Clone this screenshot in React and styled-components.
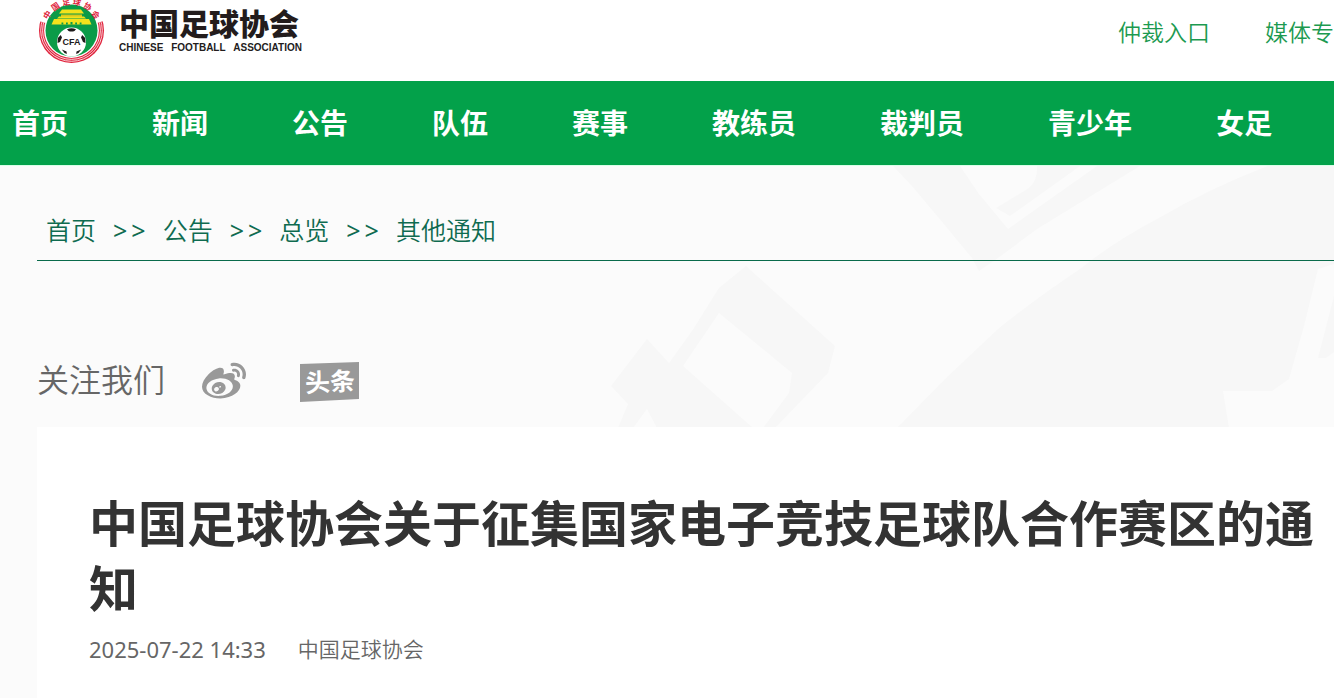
import styled, { createGlobalStyle } from "styled-components";
import { FaWeibo } from "react-icons/fa";

const menu = ["首页", "新闻", "公告", "队伍", "赛事", "教练员", "裁判员", "青少年", "女足"];
const caminho = ["首页", "公告", "总览", "其他通知"];
const emblemChars = [
    ["中", -57],
    ["国", -34],
    ["足", -11],
    ["球", 11],
    ["协", 34],
    ["会", 57],
];

function Emblem() {
    return (
        <svg width="66" height="64" viewBox="39 0 66 64" aria-hidden="true">
            <circle cx="71.5" cy="30.5" r="32.5" fill="#e0233c" />
            <circle cx="71.5" cy="30.5" r="30.8" fill="none" stroke="#fff" strokeWidth="0.8" />
            <circle cx="71.5" cy="30.5" r="28.9" fill="none" stroke="#fff" strokeWidth="0.8" />
            <circle cx="71.5" cy="30.5" r="27.4" fill="#fff" />
            <path d="M71.5 30.5L36 20V-6H107V20Z" fill="#fff" />
            <circle cx="71.5" cy="30.5" r="26" fill="#0b9b48" />
            {emblemChars.map(([char, angle]) => (
                <text
                    key={char}
                    x="71.5"
                    y="4.6"
                    textAnchor="middle"
                    transform={`rotate(${angle} 71.5 30.5)`}
                    fill="#e0233c"
                    fontFamily="'Noto Sans CJK SC', sans-serif"
                    fontWeight="700"
                    fontSize="8"
                >
                    {char}
                </text>
            ))}
            <path d="M62 9.5H81L84 13.5H59Z" fill="#f3e21c" />
            <path d="M61 14.5H82V17H61Z" fill="#d9c81d" />
            <path d="M57 18.5L59 16.5H84L86 18.5Z" fill="#f3e21c" />
            <path d="M54 19H89L91.5 24.5H51.5Z" fill="#f3e21c" />
            <path d="M61.5 24.5v-2h1.8v2M66 24.5v-2h1.8v2M70.5 24.5v-2.6h2v2.6M75.2 24.5v-2H77v2M79.7 24.5v-2h1.8v2" fill="#0b9b48" />
            <circle cx="71.5" cy="42" r="14.5" fill="#fff" />
            <path d="M67 29.3Q71.5 27 76 29.3L74.5 31Q71.5 32 68.5 31Z" fill="#1d1a1a" />
            <path d="M57.8 38L60.8 35L62 37.5L60 42L57.5 43Z" fill="#1d1a1a" />
            <path d="M85.2 38L82.2 35L81 37.5L83 42L85.5 43Z" fill="#1d1a1a" />
            <path d="M61.8 49.5L66.5 51.5L66.8 54L64.5 53Z" fill="#1d1a1a" />
            <path d="M81.2 49.5L76.5 51.5L76.2 54L78.5 53Z" fill="#1d1a1a" />
            <text
                x="71.5"
                y="45"
                textAnchor="middle"
                fill="#1d1a1a"
                fontFamily="'Liberation Sans', sans-serif"
                fontWeight="700"
                fontSize="9"
            >
                CFA
            </text>
        </svg>
    );
}

function Toutiao() {
    return (
        <svg width="60" height="40" viewBox="0 0 60 40" aria-hidden="true">
            <path d="M0 2L59 0V37L0 40Z" fill="#999" />
            <text
                x="30"
                y="29"
                textAnchor="middle"
                transform="rotate(-3 30 20)"
                fill="#fff"
                fontFamily="'Noto Sans CJK SC', sans-serif"
                fontWeight="700"
                fontSize="25"
            >
                头条
            </text>
        </svg>
    );
}

function Watermark() {
    return (
        <Pattern viewBox="0 0 754 262" aria-hidden="true">
            <path d="M313 0H380L399 28L428 63L517 0H560L457 63L418 92L399 105L392 92L363 57L332 20Z" />
            <path d="M457 0H500L430 50L416 42L449 22Q458 14 457 0Z" />
            <path d="M688 0Q630 22 577 53Q535 75 500 103Q455 133 418 163L365 213L317 262H649L643 225H692L709 213L724 160L738 103L754 98V0Z" />
            <path d="M754 130L738 192H746L754 186Z" />
            <path d="M166 100L255 180L248 207L195 262H183L209 227L212 207L139 147L103 200L173 262H77L67 243L53 262H38L48 238L31 220L67 173L89 197L112 165L139 122Z" />
        </Pattern>
    );
}

export default function App() {
    return (
        <>
            <GlobalStyle />
            <Topo>
                <Logo href="#">
                    <Emblem />
                    <LogoTexto>
                        <strong>中国足球协会</strong>
                        <small>
                            <span>CHINESE</span>
                            <span>FOOTBALL</span>
                            <span>ASSOCIATION</span>
                        </small>
                    </LogoTexto>
                </Logo>
                <Atalhos>
                    <a href="#">仲裁入口</a>
                    <a href="#">媒体专</a>
                </Atalhos>
            </Topo>
            <Menu>
                {menu.map((item) => (
                    <a key={item} href="#">{item}</a>
                ))}
            </Menu>
            <Conteudo>
                <Watermark />
                <Caminho>
                    {caminho.map((item, index) => (
                        <li key={item}>
                            {index > 0 && (
                                <Seta>
                                    <span>&gt;</span>
                                    <span>&gt;</span>
                                </Seta>
                            )}
                            <a href="#">{item}</a>
                        </li>
                    ))}
                </Caminho>
                <Redes>
                    <p>关注我们</p>
                    <a href="#" aria-label="微博"><FaWeibo size={44} /></a>
                    <a href="#" aria-label="头条"><Toutiao /></a>
                </Redes>
                <Artigo>
                    <h1>中国足球协会关于征集国家电子竞技足球队合作赛区的通知</h1>
                    <Info>
                        <time>2025-07-22 14:33</time>
                        <span>中国足球协会</span>
                    </Info>
                </Artigo>
            </Conteudo>
        </>
    );
}

const GlobalStyle = createGlobalStyle`
    * {
        box-sizing: border-box;
    }

    body {
        margin: 0;
        background-color: #fbfbfb;
        font-family: 'Noto Sans', 'Noto Sans CJK SC', sans-serif;
        font-weight: 350;
        overflow-x: hidden;
    }

    a {
        color: inherit;
        text-decoration: none;
    }

    h1, p, ul {
        margin: 0;
        padding: 0;
    }
`

const Topo = styled.header`
    display: flex;
    justify-content: space-between;
    height: 81px;
    padding-left: 39px;
    background-color: #fff;
`

const Logo = styled.a`
    display: flex;
    align-items: flex-start;
    gap: 14px;
`

const LogoTexto = styled.div`
    display: flex;
    flex-direction: column;
    padding-top: 6px;
    color: #231c1c;

    strong {
        font-size: 30px;
        line-height: 36px;
        font-weight: 900;
    }

    small {
        display: flex;
        justify-content: space-between;
        width: 183px;
        font-family: 'Liberation Sans', sans-serif;
        font-size: 10px;
        line-height: 12px;
        font-weight: 700;
    }
`

const Atalhos = styled.nav`
    display: flex;
    gap: 55px;
    padding-top: 16px;
    color: #1c9a50;
    font-size: 23px;
    line-height: 32px;
    white-space: nowrap;
`

const Menu = styled.nav`
    display: flex;
    gap: 84px;
    height: 84px;
    padding-left: 12px;
    background-color: #03a14a;
    color: #fff;
    font-size: 28px;
    line-height: 84px;
    font-weight: 700;
    white-space: nowrap;
`

const Conteudo = styled.main`
    position: relative;
    min-height: calc(100vh - 165px);
    padding: 35px 0 0 37px;
    border-top: 1px solid #d8ffe8;
`

const Pattern = styled.svg`
    position: absolute;
    top: 0;
    right: 0;
    width: 754px;
    height: 262px;
    fill: #f7f7f7;
    z-index: -1;
`

const Caminho = styled.ul`
    display: flex;
    height: 60px;
    padding-left: 9px;
    border-bottom: 1px solid #0a6b4b;
    color: #0f6b50;
    font-size: 25px;
    line-height: 58px;
    list-style: none;
`

const Seta = styled.span`
    display: inline-flex;
    gap: 4px;
    margin: 0 17px;
    font-weight: 400;
`

const Redes = styled.div`
    display: flex;
    align-items: center;
    height: 166px;
    padding-top: 76px;
    color: #999;

    p {
        margin-right: 37px;
        padding-bottom: 8px;
        color: #666;
        font-size: 32px;
    }

    a {
        display: flex;
        margin-right: 54px;
    }
`

const Artigo = styled.article`
    min-height: 272px;
    padding: 64px 18px 32px 52px;
    background-color: #fff;

    h1 {
        color: #333;
        font-size: 49px;
        line-height: 65px;
        font-weight: 700;
    }
`

const Info = styled.div`
    display: flex;
    align-items: center;
    gap: 32px;
    margin-top: 12px;
    color: #666;
    font-size: 21px;
    line-height: 32px;

    time {
        font-size: 22px;
        font-weight: 400;
    }
`
